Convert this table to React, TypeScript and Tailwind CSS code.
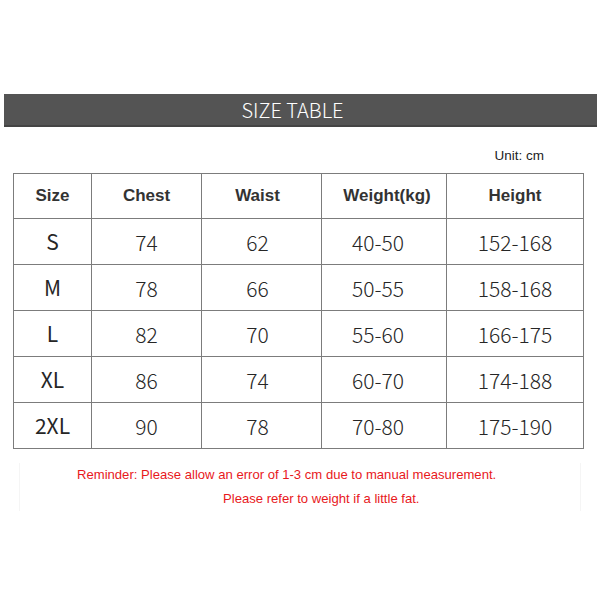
import React from 'react';

const rows = [
  { size: 'S', chest: '74', waist: '62', weight: '40-50', height: '152-168' },
  { size: 'M', chest: '78', waist: '66', weight: '50-55', height: '158-168' },
  { size: 'L', chest: '82', waist: '70', weight: '55-60', height: '166-175' },
  { size: 'XL', chest: '86', waist: '74', weight: '60-70', height: '174-188' },
  { size: '2XL', chest: '90', waist: '78', weight: '70-80', height: '175-190' },
];

const cell = 'border-[1.5px] border-[#7c7c7c] text-center align-middle';

const App = () => {
  return (
    <div className="w-[600px] h-[600px] bg-white pt-[94px] font-['Liberation_Sans',Arial,sans-serif]">
      {/* Title bar */}
      <div className="mx-[4px] w-[593px] h-[33px] bg-[#545454] border-b-2 border-[#444] flex items-center justify-center pr-[16px]">
        <span className="text-white text-[20px] font-light font-['Noto_Sans_CJK_KR','Noto_Sans',sans-serif] leading-none pt-[1px]">
          SIZE TABLE
        </span>
      </div>

      {/* Unit */}
      <div className="flex justify-end pr-[56px] pt-[22px] h-[46px]">
        <span className="text-[13.5px] text-[#222] leading-none">Unit: cm</span>
      </div>

      {/* Table */}
      <table className="ml-[13px] w-[570px] table-fixed border-collapse">
        <colgroup>
          <col className="w-[78px]" />
          <col className="w-[110px]" />
          <col className="w-[120px]" />
          <col className="w-[125px]" />
          <col className="w-[137px]" />
        </colgroup>
        <thead>
          <tr className="h-[45px] text-[17px] font-bold text-[#333]">
            <th className={cell}>Size</th>
            <th className={cell}>Chest</th>
            <th className={`${cell} pr-[8px]`}>Waist</th>
            <th className={`${cell} pl-[6px]`}>Weight(kg)</th>
            <th className={cell}>Height</th>
          </tr>
        </thead>
        <tbody className="font-['Noto_Sans_CJK_KR','Noto_Sans',sans-serif] text-[21px] text-[#262626] font-light">
          {rows.map((r) => (
            <tr key={r.size} className="h-[46px]">
              <td className={`${cell} font-normal`}>{r.size}</td>
              <td className={`${cell} pt-[2px]`}>{r.chest}</td>
              <td className={`${cell} pr-[8px] pt-[2px]`}>{r.waist}</td>
              <td className={`${cell} pr-[12px] pt-[2px]`}>{r.weight}</td>
              <td className={`${cell} pt-[2px]`}>{r.height}</td>
            </tr>
          ))}
        </tbody>
      </table>

      {/* Reminder */}
      <div className="mx-[19px] mt-[14px] h-[48px] border-x border-[#f5f5f5] text-[13.1px] text-[#e8181c] leading-none">
        <p className="pl-[57px] pt-[5px]">Reminder: Please allow an error of 1-3 cm due to manual measurement.</p>
        <p className="pl-[203px] pt-[11px]">Please refer to weight if a little fat.</p>
      </div>
    </div>
  );
};

export default App;
